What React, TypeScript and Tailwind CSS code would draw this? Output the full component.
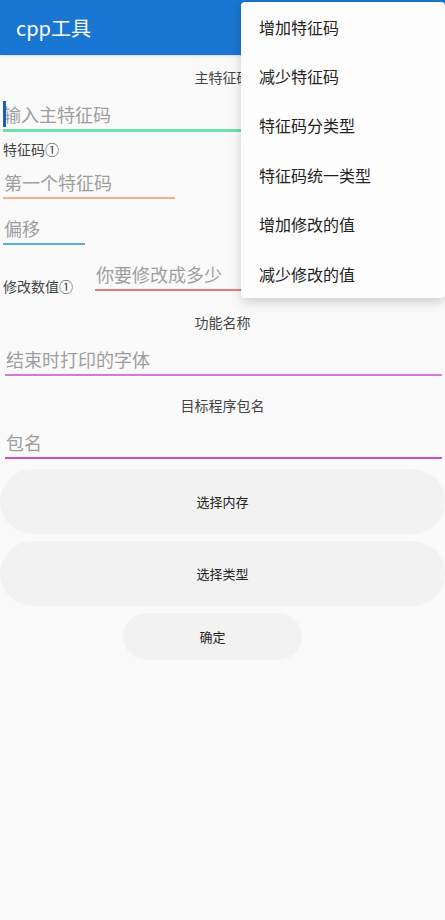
const font = { fontFamily: '"Noto Sans CJK SC", "Noto Sans", Roboto, sans-serif' };

const menuItems = ['增加特征码', '减少特征码', '特征码分类型', '特征码统一类型', '增加修改的值', '减少修改的值'];

export default function App() {
  return (
    <div className="relative w-[445px] h-[920px] bg-[#fafafa] overflow-hidden" style={font}>
      {/* App bar */}
      <header className="h-[55px] bg-[#1976d2] px-4 flex items-center shadow-sm">
        <span className="text-white text-[20px] leading-none">cpp工具</span>
      </header>

      <div className="flex flex-col">
        <div className="mt-[7px] text-center text-[14px] leading-[30px] text-[#444]">主特征码</div>

        <div className="relative ml-[3px] mr-[3px] pt-[7px] border-b-[3px] border-[#6fe0aa] text-[18px] leading-[30px] text-[#9e9e9e]">
          <span className="absolute left-0 top-[9px] w-[3px] h-[26px] bg-[#1a5fb8]"></span>
          输入主特征码
        </div>

        <div className="mt-[7px] ml-[3px] text-[14px] leading-[20px] text-[#444]">特征码①</div>

        <div className="ml-[3px] w-[172px] pt-[8px] pl-[1px] border-b-2 border-[#f6ad8b] text-[18px] leading-[30px] text-[#9e9e9e]">
          第一个特征码
        </div>

        <div className="ml-[3px] w-[82px] pt-[14px] pl-[1px] border-b-2 border-[#5ab0d8] text-[18px] leading-[30px] text-[#9e9e9e]">
          偏移
        </div>

        <div className="flex items-start">
          <div className="mt-[31px] ml-[3px] text-[14px] leading-[20px] text-[#444] w-[92px]">修改数值①</div>
          <div className="w-[160px] pt-[14px] pl-[1px] border-b-2 border-[#ee7878] text-[18px] leading-[30px] text-[#9e9e9e]">
            你要修改成多少
          </div>
        </div>

        <div className="mt-[16px] text-center text-[14px] leading-[20px] text-[#444]">功能名称</div>

        <div className="ml-[5px] mr-[3px] pt-[12px] pl-[1px] border-b-2 border-[#d47ad8] text-[18px] leading-[30px] text-[#9e9e9e]">
          结束时打印的字体
        </div>

        <div className="mt-[19px] text-center text-[14px] leading-[20px] text-[#444]">目标程序包名</div>

        <div className="ml-[5px] mr-[3px] pt-[12px] pl-[1px] border-b-2 border-[#c94fc9] text-[18px] leading-[30px] text-[#9e9e9e]">
          包名
        </div>

        <div className="mt-[10px] flex flex-col gap-[7px]">
          <button className="h-[65px] w-full rounded-full bg-[#f2f2f2] text-[13px] text-[#222]">选择内存</button>
          <button className="h-[65px] w-full rounded-full bg-[#f2f2f2] text-[13px] text-[#222]">选择类型</button>
          <button className="ml-[123px] h-[47px] w-[179px] rounded-full bg-[#f2f2f2] text-[13px] text-[#222]">确定</button>
        </div>
      </div>

      {/* Overflow menu */}
      <div className="absolute right-0 top-[2px] w-[204px] bg-[#fdfdfd] shadow-[0_4px_12px_rgba(0,0,0,0.18)] rounded-sm flex flex-col">
        {menuItems.map((item) => (
          <div key={item} className="h-[49.4px] flex items-center px-[18px] text-[16px] text-[#222]">
            {item}
          </div>
        ))}
      </div>
    </div>
  );
}
